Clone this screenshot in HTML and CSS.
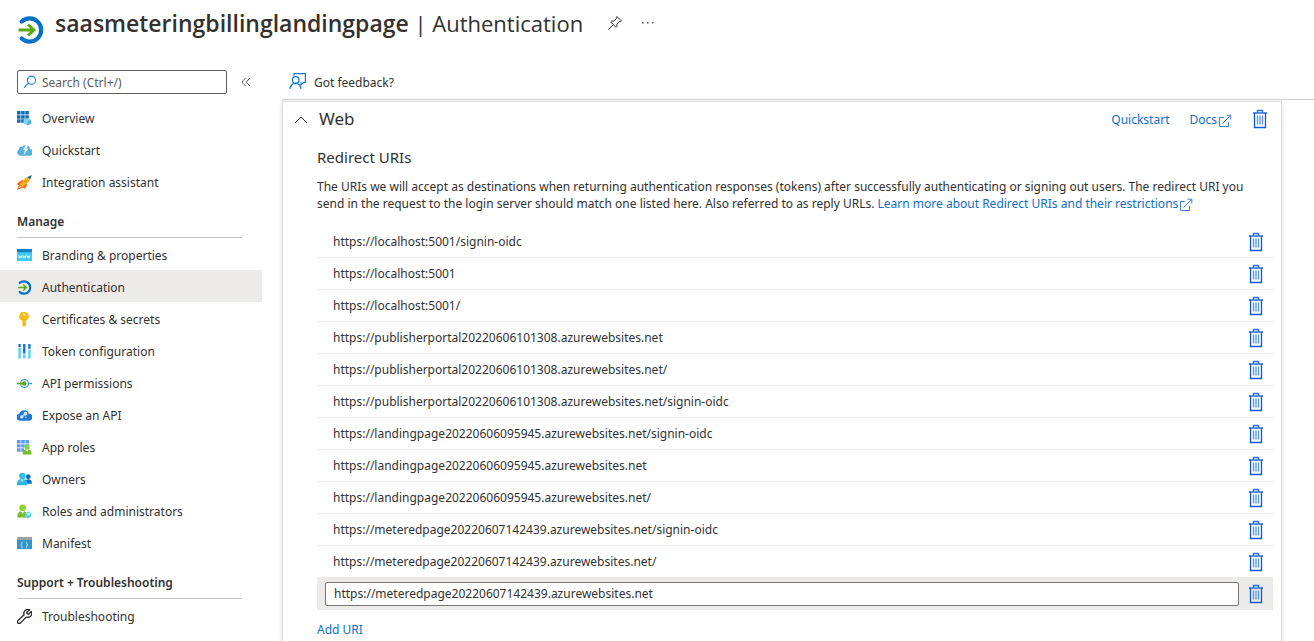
FILE: index.html
```html
<!DOCTYPE html>
<html lang="en">
<head>
<meta charset="utf-8">
<title>saasmeteringbillinglandingpage | Authentication</title>
<link rel="stylesheet" href="styles.css">
</head>
<body>
<svg class="sprite" aria-hidden="true">
  <symbol id="trash" viewBox="0 0 16 20">
    <path d="M1 4h14M5.500 3.500V1.500h5v2" fill="none" stroke="#2b70e0" stroke-width="1.400"/>
    <path d="M2.500 4v14.500h11V4" fill="none" stroke="#0a5bd8" stroke-width="1.300"/>
    <path d="M5.500 6.500v9M8 6.500v9M10.500 6.500v9" stroke="#5b93e8" stroke-width="1.300"/>
  </symbol>
  <symbol id="external" viewBox="0 0 14 14">
    <path d="M6 3.500H1.500v9h9V8M4.500 9.500l8-8M8.500 1.200h4.300v4.300" fill="none" stroke="#3a80dc" stroke-width="1"/>
  </symbol>
  <symbol id="auth" viewBox="0 0 26 28">
    <path d="M4.200 5.500A11.600 11.600 0 1 1 4.200 22.500" fill="none" stroke="#0072c6" stroke-width="4.200" stroke-linecap="round"/>
    <path d="M1 14h15M10.500 8.500l6 5.500-6 5.500" fill="none" stroke="#59a80c" stroke-width="2.800"/>
  </symbol>
</svg>

<header class="title-bar">
  <svg class="title-logo" viewBox="0 0 26 28" aria-hidden="true"><use href="#auth"/></svg>
  <h1><b>saasmeteringbillinglandingpage</b> | Authentication</h1>
  <button class="icon-button" aria-label="Pin"><svg width="16" height="16" viewBox="0 0 16 16" fill="none" stroke="#323130"><path d="M10 1.500l4.500 4.500-1 .6-1-.1-2.700 2.700.2 2.200-.9.900L3.700 6.900l.9-.9 2.200.2 2.700-2.700-.1-1zM6.200 9.800L1.500 14.500"/></svg></button>
  <button class="icon-button" aria-label="More"><svg width="16" height="16" viewBox="0 0 16 16" fill="#55534f"><path d="M2 7h1.500v1.500H2zM7 7h1.500v1.500H7zM12 7h1.500v1.500H12z"/></svg></button>
</header>

<div class="shell">
  <aside class="sidebar">
    <div class="search-row">
      <label class="search">
        <svg width="14" height="14" viewBox="0 0 14 14" fill="none" stroke="#2b88d8" stroke-width="1.200" aria-hidden="true"><circle cx="8.500" cy="5.200" r="4.100"/><path d="M5.500 8.200L1 12.700"/></svg>
        <input type="text" placeholder="Search (Ctrl+/)" aria-label="Search">
      </label>
      <button class="icon-button" aria-label="Collapse menu"><svg width="10" height="10" viewBox="0 0 10 10" fill="none" stroke="#605e5c"><path d="M4.500 1l-3.500 4 3.500 4M8.800 1L5.300 5l3.500 4"/></svg></button>
    </div>
    <nav>
      <ul>
        <li><a href="#"><svg viewBox="0 0 16 16"><path fill="#0f6cbd" d="M0 0h3.800v3.800H0zM4.400 0h3.800v3.800H4.400zM8.800 0h3.800v3.800H8.800zM0 4.400h3.800v3.800H0zM4.400 4.400h3.800v3.800H4.400zM8.800 4.400h3.800v3.800H8.800zM0 8.800h3.800v3.800H0zM4.400 8.800h3.800v3.800H4.400z"/><path fill="#8bd0ec" d="M11 7.500l4 1.800v4.200L11 15.500l-4-2V9.300z"/><path fill="#4fb3dc" d="M11 11.200v4.300l4-2V9.300z"/></svg>Overview</a></li>
        <li><a href="#"><svg viewBox="0 0 16 16"><path fill="#56b1db" d="M3.200 13.500A3.500 3.500 0 0 1 2 7 3.500 3.500 0 0 1 6 3.800 4.500 4.500 0 0 1 14 6.500 3.500 3.500 0 0 1 13 13.500z"/><path fill="#fff" d="M9.500 1.500L6.500 7.500h2.200L7 13l5-6.800H9.800L12 2z"/></svg>Quickstart</a></li>
        <li><a href="#"><svg viewBox="0 0 16 16"><path fill="#f26b21" d="M1 8.300L6 5l5 5-2.500 5-2.200-1.800L0 16l2-5.300L0 10z"/><path fill="#fbb716" d="M3.500 10L9 3 15 .8 13 7 6 12.500z"/><path fill="#ffd94c" d="M1.500 14.500l2-4 1.800 1.700z"/><path fill="#0f6cbd" d="M11.200 2.200L16 0 13.900 4.900z"/><circle cx="9.400" cy="6.700" r="1.300" fill="#f58220"/></svg>Integration assistant</a></li>
      </ul>
      <section>
        <h2>Manage</h2>
        <ul>
          <li><a href="#"><svg viewBox="0 0 16 16"><path fill="#42c9f0" d="M0 1h16v13H0z"/><path fill="#1480c9" d="M0 1h16v3.500H0z"/><path fill="none" stroke="#e8fbff" stroke-width="1" d="M2 8l.8 2.500.8-2 .8 2L5.200 8M6.300 8l.8 2.500.8-2 .8 2L9.500 8M10.700 8l.8 2.500.8-2 .8 2L14 8"/></svg>Branding &amp; properties</a></li>
          <li><a href="#" class="current" aria-current="page"><svg viewBox="0 0 26 28"><use href="#auth"/></svg>Authentication</a></li>
          <li><a href="#"><svg viewBox="0 0 16 16"><path fill="#fcb813" fill-rule="evenodd" d="M7.500 0a4.800 4.800 0 0 1 2.200 9.200l-.5.400v1l.8.900-.8.900.8.900-1 1L7.500 15.900 5.800 14.300V9.400A4.800 4.800 0 0 1 7.500 0zM7.500 1.500a1.200 1.200 0 1 0 0 2.400A1.200 1.200 0 0 0 7.500 1.500z"/></svg>Certificates &amp; secrets</a></li>
          <li><a href="#"><svg viewBox="0 0 16 16"><path fill="#0f74cc" d="M1.500 0H4v3.500H1.500zM6.500 0H9v10H6.500zM12 0h2.500v5H12z"/><path fill="#50d3f4" d="M1.500 4.300H4V15.500H1.500zM6.500 10.800H9v4.700H6.500zM12 5.800h2.500v9.700H12z"/></svg>Token configuration</a></li>
          <li><a href="#"><svg viewBox="0 0 16 16"><circle cx="8" cy="8" r="4.200" fill="none" stroke="#3f9fcf" stroke-width="1.300"/><path d="M12 8h4" stroke="#3f9fcf" stroke-width="1.500"/><path d="M0 8h6" stroke="#59a80c" stroke-width="1.800"/><circle cx="7.700" cy="8" r="2.400" fill="#59a80c"/></svg>API permissions</a></li>
          <li><a href="#"><svg viewBox="0 0 16 16"><path fill="#1f77d6" d="M3.500 13.500A3.600 3.600 0 0 1 2.700 6.200 5.100 5.100 0 0 1 12.500 5.800 3.800 3.800 0 0 1 12.500 13.500z"/><path d="M5 9.700L9 5.900" stroke="#9ecbf5" stroke-width="2"/><circle cx="5" cy="9.500" r="1.800" fill="#d3e8fb"/><circle cx="9" cy="6" r="2" fill="#d3e8fb"/><circle cx="9.500" cy="9.800" r="1" fill="#8abef0"/></svg>Expose an API</a></li>
          <li><a href="#"><svg viewBox="0 0 16 16"><path fill="#5a9cec" d="M0 0h3.800v3.700H0zM4.500 0h3.800v3.700H4.500zM9 0h3.800v3.700H9zM0 4.400h3.800v3.700H0zM4.500 4.400h3.800v3.700H4.500zM9 4.400h3.800v3.700H9zM0 8.800h3.800v3.700H0zM4.500 8.800h3v3.700h-3z"/><path fill="#76bc2d" d="M6 15.500c0-4 1-5 3-5.500h3.500c2 .5 3 1.500 3 5.500z"/><circle cx="10.800" cy="7.500" r="2.800" fill="#86d633"/><path fill="#fff" d="M9.500 10.300h2.600l-1.300 2.300z"/></svg>App roles</a></li>
          <li><a href="#"><svg viewBox="0 0 16 16"><circle cx="12" cy="5" r="2.600" fill="#1372c9"/><path fill="#1372c9" d="M9 12.500c0-3.800.8-4.800 3-4.800 2.500 0 4 1.500 4 4.800z"/><circle cx="5.700" cy="4.300" r="3.500" fill="#32bedd"/><path fill="#2bb6e3" d="M0 14c0-4.500 1.500-6.500 5.500-6.500S11.300 9.500 11.300 14z"/><path fill="#d8f7ff" d="M4 8h3l-1.500 3z"/></svg>Owners</a></li>
          <li><a href="#"><svg viewBox="0 0 16 16"><circle cx="6" cy="4" r="3.600" fill="#8cd12f"/><path fill="#76bc2d" d="M.3 14.300c0-4.500 1.500-6.600 5.700-6.600s5.500 2.300 5.500 6.600z"/><path fill="#fff" d="M4.400 7.500h3.200L6 11z"/><path fill="#5fd4f4" d="M9 9l3.500-1L15.500 10.500l-1 3.500-3 1.500L8.500 12.500z"/><path fill="#a9ebfb" d="M9.500 9.500l3-.5 2 2-3 1.200z"/></svg>Roles and administrators</a></li>
          <li><a href="#"><svg viewBox="0 0 16 16"><path fill="#3594c8" d="M0 1h16v13H0z"/><path fill="#a0a1a2" d="M0 1h16v3.200H0z"/><path fill="none" stroke="#c8e6f5" d="M6 6.500q-1.200 0-1 1.500t-1 1.500q1.200 0 1 1.500t1 1.500M9.500 6.500q1.200 0 1 1.500t1 1.500q-1.200 0-1 1.500t-1 1.500"/></svg>Manifest</a></li>
        </ul>
      </section>
      <section class="support">
        <h2>Support + Troubleshooting</h2>
        <ul>
          <li><a href="#"><svg viewBox="0 0 16 16"><path fill="none" stroke="#1b1a19" stroke-width="1.300" stroke-linejoin="round" d="M13.500.8A4.300 4.300 0 0 0 7.600 6.200L1 12.400a1.700 1.700 0 0 0 2.500 2.600L9.800 8.600A4.300 4.300 0 0 0 15.300 2.700L12.500 5.400 10.700 4.900 10.400 3.500z"/></svg>Troubleshooting</a></li>
          <li aria-hidden="true"><a href="#" tabindex="-1"><svg viewBox="0 0 16 16"><circle cx="7" cy="7.500" r="6.500" fill="none" stroke="#323130" stroke-width="1.300"/></svg></a></li>
        </ul>
      </section>
    </nav>
  </aside>

  <main class="content">
    <div class="toolbar">
      <button class="feedback"><svg width="18" height="18" viewBox="0 0 18 18" fill="none" stroke="#0f78d0" stroke-width="1.200" aria-hidden="true"><path d="M5 2.800V.7h11.400v8.600h-1.600L12 11.800v-2.500"/><circle cx="6.700" cy="7" r="3.300"/><path d="M1 16c.5-3.500 2.500-5.700 5.700-5.700S11.500 12.500 12 16"/></svg>Got feedback?</button>
    </div>
    <article class="card">
      <div class="card-head">
        <button class="icon-button" aria-label="Collapse Web"><svg width="14" height="14" viewBox="0 0 14 14" fill="none" stroke="#323130" stroke-width="1"><path d="M1 11l6-6 6 6"/></svg></button>
        <h2>Web</h2>
        <a href="#">Quickstart</a>
        <a href="#" class="docs">Docs<svg class="external" aria-hidden="true"><use href="#external"/></svg></a>
        <button class="icon-button" aria-label="Delete Web"><svg class="trash"><use href="#trash"/></svg></button>
      </div>
      <div class="card-body">
        <h3>Redirect URIs</h3>
        <p>The URIs we will accept as destinations when returning authentication responses (tokens) after successfully authenticating or signing out users. The redirect URI you send in the request to the login server should match one listed here. Also referred to as reply URLs. <a href="#">Learn more about Redirect URIs and their restrictions<svg class="external" aria-hidden="true"><use href="#external"/></svg></a></p>
        <ul class="uris">
          <li><span>https://localhost:5001/signin-oidc</span><button class="icon-button" aria-label="Delete"><svg class="trash"><use href="#trash"/></svg></button></li>
          <li><span>https://localhost:5001</span><button class="icon-button" aria-label="Delete"><svg class="trash"><use href="#trash"/></svg></button></li>
          <li><span>https://localhost:5001/</span><button class="icon-button" aria-label="Delete"><svg class="trash"><use href="#trash"/></svg></button></li>
          <li><span>https://publisherportal20220606101308.azurewebsites.net</span><button class="icon-button" aria-label="Delete"><svg class="trash"><use href="#trash"/></svg></button></li>
          <li><span>https://publisherportal20220606101308.azurewebsites.net/</span><button class="icon-button" aria-label="Delete"><svg class="trash"><use href="#trash"/></svg></button></li>
          <li><span>https://publisherportal20220606101308.azurewebsites.net/signin-oidc</span><button class="icon-button" aria-label="Delete"><svg class="trash"><use href="#trash"/></svg></button></li>
          <li><span>https://landingpage20220606095945.azurewebsites.net/signin-oidc</span><button class="icon-button" aria-label="Delete"><svg class="trash"><use href="#trash"/></svg></button></li>
          <li><span>https://landingpage20220606095945.azurewebsites.net</span><button class="icon-button" aria-label="Delete"><svg class="trash"><use href="#trash"/></svg></button></li>
          <li><span>https://landingpage20220606095945.azurewebsites.net/</span><button class="icon-button" aria-label="Delete"><svg class="trash"><use href="#trash"/></svg></button></li>
          <li><span>https://meteredpage20220607142439.azurewebsites.net/signin-oidc</span><button class="icon-button" aria-label="Delete"><svg class="trash"><use href="#trash"/></svg></button></li>
          <li><span>https://meteredpage20220607142439.azurewebsites.net/</span><button class="icon-button" aria-label="Delete"><svg class="trash"><use href="#trash"/></svg></button></li>
          <li class="editing"><input type="text" aria-label="Redirect URI" value="https://meteredpage20220607142439.azurewebsites.net"><button class="icon-button" aria-label="Delete"><svg class="trash"><use href="#trash"/></svg></button></li>
        </ul>
        <a href="#" class="add">Add URI</a>
      </div>
    </article>
  </main>
</div>
</body>
</html>
```
FILE: styles.css
```css
* { box-sizing: border-box; }
body {
  margin: 0;
  height: 100vh;
  overflow: hidden;
  display: flex;
  flex-direction: column;
  background: #fff;
  color: #323130;
  font: 12px/17px "Noto Sans", "Open Sans", sans-serif;
}
.sprite { display: none; }
h1, h2, h3, p, ul { margin: 0; padding: 0; }
ul { list-style: none; }
a { color: #0f6fc9; text-decoration: none; }
button, input { font: inherit; color: inherit; }
button { background: none; border: 0; padding: 0; }
.icon-button { display: flex; align-items: center; justify-content: center; flex: none; }

.title-bar { display: flex; align-items: center; height: 66px; padding: 0 17px 20px; flex: none; }
.title-logo { width: 27px; height: 28px; margin: 14px 11px 0 0; }
.title-bar h1 { font-family: "Open Sans", sans-serif; font-size: 22px; line-height: 32px; font-weight: 400; margin-right: 23px; }
.title-bar h1 b { font-size: 23px; font-weight: 600; }
.title-bar .icon-button { width: 17px; margin-right: 16px; }

.shell { display: flex; flex: 1; min-height: 0; }
.sidebar { width: 262px; flex: none; overflow: hidden; }
.search-row { display: flex; align-items: center; height: 36px; padding: 0 11px 4px 17px; }
.search { display: flex; align-items: center; gap: 5px; flex: 1; height: 24px; padding: 0 5px; border: 1px solid #605e5c; border-radius: 2px; }
.search input { flex: 1; min-width: 0; border: 0; padding: 0; outline: 0; background: none; }
.search input::placeholder { color: #605e5c; opacity: 1; }
.search-row .icon-button { width: 24px; padding-left: 14px; }
nav h2 { height: 40px; margin: 0 20px 0 17px; padding-top: 15px; border-bottom: 1px solid #c8c6c4; font-size: 12px; line-height: 17px; font-weight: 600; }
nav a { display: flex; align-items: center; gap: 10px; height: 32px; padding-left: 17px; color: inherit; }
nav section a { padding-top: 2px; }
nav a svg { width: 15px; height: 15px; flex: none; }
nav .current { background: #edebe9; }
.support { padding-top: 1px; }

.content { flex: 1; min-width: 0; margin-left: 20px; display: flex; flex-direction: column; }
.toolbar { height: 34px; flex: none; border-bottom: 1px solid #d2d0ce; padding-left: 7px; }
.feedback { display: flex; align-items: center; gap: 7px; height: 32px; }
.card { flex: 1; margin: 1px 32px 0 0; border: 1px solid #e1dfdd; border-bottom: 0; box-shadow: 0 2px 5px rgba(0, 0, 0, 0.14); }
.card-head { display: flex; align-items: center; height: 34px; padding: 0 13px 0 11px; }
.card-head h2 { flex: 1; margin-left: 11px; font-size: 17px; line-height: 24px; font-weight: 400; }
.card-head > a { margin-right: 20px; }
.trash { width: 16px; height: 20px; display: block; }
.external { width: 14px; height: 14px; margin-left: 1px; vertical-align: -4px; }
.card-body { padding: 9px 8px 0 34px; }
h3 { font-size: 15px; line-height: 24px; font-weight: 400; }
p { padding: 9px 12px 14px 0; }
.uris li { display: flex; align-items: center; height: 32px; padding: 0 9px 0 16px; border-bottom: 1px solid #edebe9; }
.uris span { flex: 1; }
.uris .editing { padding-left: 8px; background: #edebe9; }
.editing input { flex: 1; height: 24px; margin-right: 9px; padding: 0 8px; border: 1px solid #797775; border-radius: 2px; background: #fff; }
.add { display: inline-block; margin-top: 11px; }
```
